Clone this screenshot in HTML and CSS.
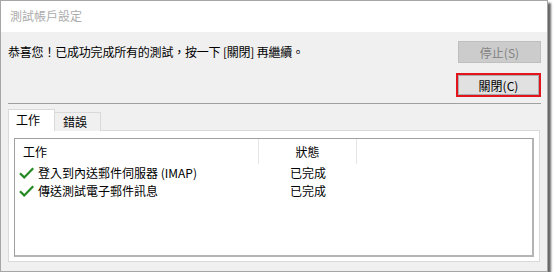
FILE: index.html
```html
<!DOCTYPE html>
<html lang="zh-Hant">
<head>
    <meta charset="UTF-8">
    <title>測試帳戶設定</title>
    <link rel="stylesheet" href="styles.css">
</head>
<body>
<div class="window">
    <!--標題列-->
    <div class="titlebar">測試帳戶設定</div>

    <div class="content">
        <div class="msg_row">
            <p class="msg">恭喜您！已成功完成所有的測試，按一下 [關閉] 再繼續。</p>
            <button class="btn btn_disabled">停止(S)</button>
        </div>
        <div class="close_row">
            <div class="focus_ring"><button class="btn">關閉(C)</button></div>
        </div>
        <div class="sep"></div>

        <!--分頁-->
        <div class="tabs">
            <div class="tab tab_active">工作</div>
            <div class="tab">錯誤</div>
        </div>
        <div class="panel">
            <div class="listview">
                <div class="lv_header">
                    <div class="cell cell_task">工作</div>
                    <div class="cell cell_status">狀態</div>
                </div>
                <div class="lv_row">
                    <div class="cell cell_task">
                        <svg class="check" width="15" height="12" viewBox="0 0 15 12"><path d="M1 6.2 L5.2 10.4 L14.2 1.2" fill="none" stroke="#238a23" stroke-width="2.2"/></svg>
                        登入到內送郵件伺服器 (IMAP)
                    </div>
                    <div class="cell cell_status">已完成</div>
                </div>
                <div class="lv_row">
                    <div class="cell cell_task">
                        <svg class="check" width="15" height="12" viewBox="0 0 15 12"><path d="M1 6.2 L5.2 10.4 L14.2 1.2" fill="none" stroke="#238a23" stroke-width="2.2"/></svg>
                        傳送測試電子郵件訊息
                    </div>
                    <div class="cell cell_status">已完成</div>
                </div>
            </div>
        </div>
    </div>
</div>
</body>
</html>
```

FILE: styles.css
```css
*{
    margin: 0;
    padding: 0;
    box-sizing: border-box;
}
body{
    background-color: #FFFFFF;
    font-family: "Noto Sans CJK TC", "Liberation Sans", sans-serif;
    font-size: 12px;
    color: #000000;
}
.window{
    width: 548px;
    height: 272px;
    border: 1px solid #a6a6a6;
    box-shadow: 3px 3px 2px rgba(0,0,0,0.6);
    display: flex;
    flex-direction: column;
}
.titlebar{
    height: 31px;
    line-height: 30px;
    padding-left: 9px;
    background-color: #FFFFFF;
    color: #acacac;
}
.content{
    flex: 1;
    display: flex;
    flex-direction: column;
    background-color: #f0f0f0;
    padding: 9px 6px 9px 7px;
}
.msg_row{
    display: flex;
    justify-content: space-between;
    align-items: center;
    height: 22px;
}
.msg{
    line-height: 22px;
    letter-spacing: -0.2px;
}
.btn{
    width: 83px;
    height: 22px;
    font-family: inherit;
    font-size: 12px;
    background-color: #e1e1e1;
    border: 1px solid #adadad;
    color: #000000;
}
.btn_disabled{
    background-color: #cccccc;
    border-color: #bfbfbf;
    color: #838383;
}
.close_row{
    display: flex;
    justify-content: flex-end;
    margin-top: 10px;
}
.focus_ring{
    width: 85px;
    height: 24px;
    border: 2px solid #e2151f;
    display: flex;
}
.focus_ring .btn{
    width: 100%;
    height: 100%;
}
.sep{
    height: 1px;
    background-color: #a0a0a0;
    margin-top: 6px;
}
.tabs{
    display: flex;
    align-items: flex-end;
    margin-top: 5px;
    height: 22px;
    position: relative;
    z-index: 1;
    margin-bottom: -1px;
}
.tab{
    width: 46px;
    height: 19px;
    line-height: 18px;
    padding-left: 8px;
    border: 1px solid #d9d9d9;
    border-bottom: none;
    background-color: #f0f0f0;
}
.tab_active{
    width: 47px;
    height: 22px;
    line-height: 20px;
    padding-left: 7px;
    background-color: #FFFFFF;
}
.tab + .tab{
    border-left: none;
}
.panel{
    flex: 1;
    margin-right: 1px;
    background-color: #FFFFFF;
    border: 1px solid #d9d9d9;
    padding: 7px 5px 4px 5px;
    display: flex;
}
.listview{
    flex: 1;
    border: 1px solid #a0a0a0;
    border-right-width: 2px;
    border-bottom-width: 2px;
    border-right-color: #b4b4b4;
    border-bottom-color: #b4b4b4;
    background-color: #FFFFFF;
}
.lv_header{
    display: flex;
    height: 25px;
    line-height: 25px;
}
.lv_header .cell_task{
    padding-left: 8px;
    border-right: 1px solid #e5e5e5;
}
.lv_header .cell_status{
    border-right: 1px solid #e5e5e5;
}
.lv_row{
    display: flex;
    height: 18px;
    line-height: 18px;
}
.cell_task{
    width: 244px;
    padding-left: 4px;
    display: flex;
    align-items: center;
}
.cell_status{
    width: 98px;
    text-align: center;
}
.check{
    margin-right: 4px;
}
```
